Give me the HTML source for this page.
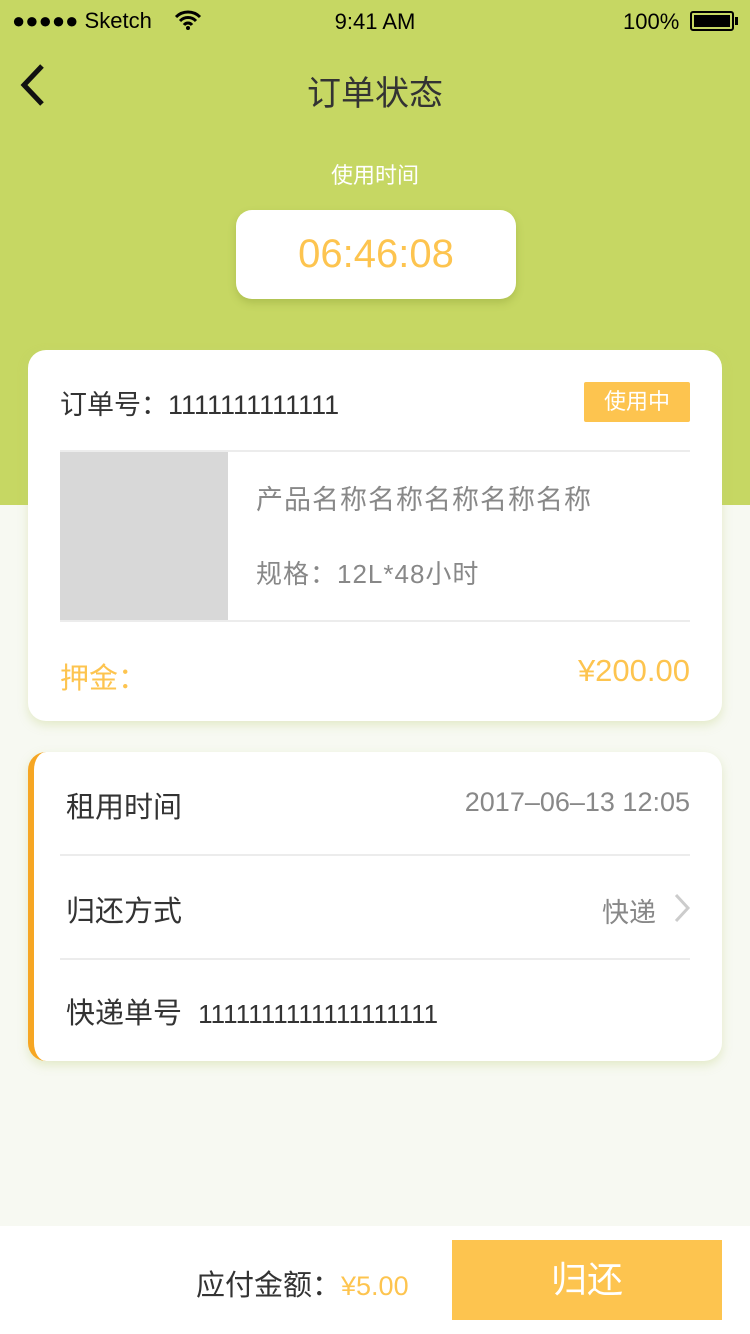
<!DOCTYPE html>
<html><head><meta charset="utf-8"><style>
*{margin:0;padding:0;box-sizing:border-box}
body{width:750px;height:1334px;position:relative;background:#f7f9f2;font-family:"Liberation Sans","Noto Sans CJK SC",sans-serif;overflow:hidden}
.abs{position:absolute}
.top{left:0;top:0;width:750px;height:505px;background:#c6d763}
.card{background:#fff;border-radius:18px;box-shadow:0 4px 10px rgba(190,205,120,.35)}
.line{height:2px;background:#ececec}
</style></head><body>
<div class="abs top"></div>
<div class="abs" style="left:12px;top:8px;font-size:22px;color:#000">●●●●● Sketch</div>
<svg class="abs" style="left:174px;top:10px" width="28" height="20" viewBox="0 0 28 20"><path d="M2 7a17 17 0 0 1 24 0M6 11a11 11 0 0 1 16 0M10 15a5 5 0 0 1 8 0" stroke="#000" stroke-width="3" fill="none"/><circle cx="14" cy="18" r="2"/></svg>
<div class="abs" style="left:0;width:750px;top:9px;text-align:center;font-size:22px">9:41 AM</div>
<div class="abs" style="left:623px;top:9px;font-size:22px">100%</div>
<div class="abs" style="left:690px;top:11px;width:44px;height:20px;border:2px solid #000;border-radius:3px;padding:2px"><div style="background:#000;width:100%;height:100%"></div></div>
<div class="abs" style="left:735px;top:17px;width:3px;height:8px;background:#000"></div>
<svg class="abs" style="left:14px;top:62px" width="32" height="46"><path d="M28 4 L10 23 L28 42" stroke="#111" stroke-width="5" fill="none"/></svg>
<div class="abs" style="left:0;width:750px;top:66px;text-align:center;font-size:34px;color:#333">订单状态</div>
<div class="abs" style="left:0;width:750px;top:158px;text-align:center;font-size:22px;color:#fff">使用时间</div>
<div class="abs" style="left:236px;top:210px;width:280px;height:89px;background:#fff;border-radius:16px;box-shadow:0 4px 8px rgba(120,140,40,.3);text-align:center;line-height:89px;font-size:40px;color:#fdc44f">06:46:08</div>

<div class="abs card" style="left:28px;top:350px;width:694px;height:371px">
 <div class="abs" style="left:32px;top:33px;font-size:27px;color:#333">订单号：1111111111111</div>
 <div class="abs" style="left:556px;top:32px;width:106px;height:40px;background:#fdc44f;color:#fff;font-size:22px;text-align:center;line-height:40px;border-radius:2px">使用中</div>
 <div class="abs line" style="left:32px;top:100px;width:630px"></div>
 <div class="abs" style="left:32px;top:102px;width:168px;height:168px;background:#d8d8d8"></div>
 <div class="abs" style="left:228px;top:128px;font-size:27px;letter-spacing:1px;color:#888">产品名称名称名称名称名称</div>
 <div class="abs" style="left:228px;top:204px;font-size:26px;letter-spacing:1px;color:#888">规格：12L*48小时</div>
 <div class="abs line" style="left:32px;top:270px;width:630px"></div>
 <div class="abs" style="left:32px;top:305px;font-size:29px;color:#fdc44f">押金：</div>
 <div class="abs" style="right:32px;top:303px;font-size:31px;color:#fdc44f">¥200.00</div>
</div>

<div class="abs card" style="left:28px;top:752px;width:694px;height:309px;border-left:6px solid #f6a623">
 <div class="abs" style="left:32px;top:32px;font-size:29px;color:#333">租用时间</div>
 <div class="abs" style="right:32px;top:35px;font-size:27px;color:#888">2017–06–13 12:05</div>
 <div class="abs line" style="left:26px;top:102px;width:630px"></div>
 <div class="abs" style="left:32px;top:136px;font-size:29px;color:#333">归还方式</div>
 <div class="abs" style="right:66px;top:139px;font-size:27px;color:#888">快递</div>
 <svg class="abs" style="right:30px;top:140px" width="20" height="32"><path d="M4 3 L16 16 L4 29" stroke="#ccc" stroke-width="3" fill="none"/></svg>
 <div class="abs line" style="left:26px;top:206px;width:630px"></div>
 <div class="abs" style="left:32px;top:238px;font-size:29px;color:#333">快递单号&nbsp;&nbsp;<span style="font-size:26px">1111111111111111111</span></div>
</div>

<div class="abs" style="left:0;top:1226px;width:750px;height:108px;background:#fff"></div>
<div class="abs" style="left:196px;top:1262px;font-size:29px;color:#333">应付金额：<span style="color:#fdc44f;font-size:27px">¥5.00</span></div>
<div class="abs" style="left:452px;top:1240px;width:270px;height:80px;background:#fdc44f;color:#fff;font-size:36px;text-align:center;line-height:80px">归还</div>
</body></html>
